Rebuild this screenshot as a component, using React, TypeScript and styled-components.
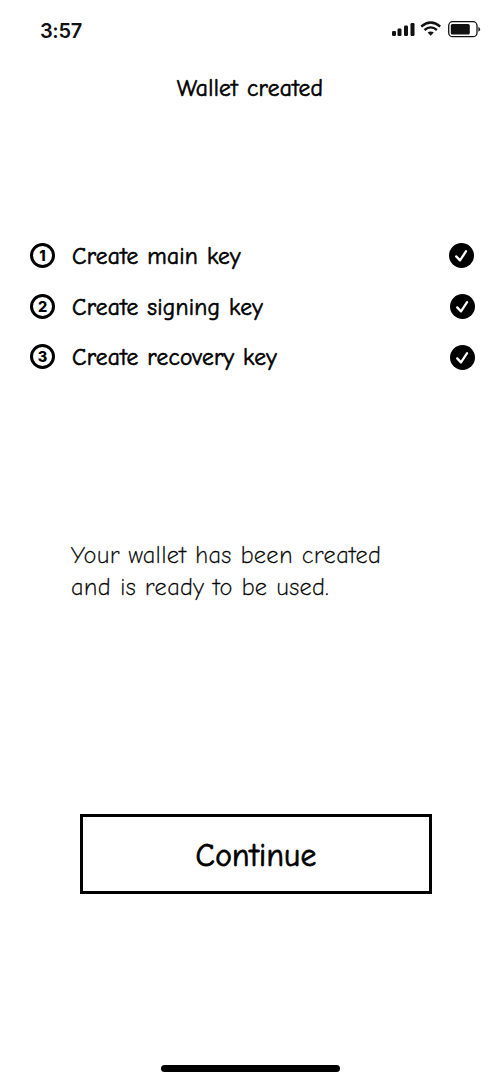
import React from "react";
import styled, { createGlobalStyle } from "styled-components";

const GlobalStyle = createGlobalStyle`
  * { box-sizing: border-box; }
  body { margin: 0; background: #fff; }
`;

const Screen = styled.main`
  width: 500px;
  height: 1083px;
  display: flex;
  flex-direction: column;
  overflow: hidden;
  background: #fff;
  color: #000;
  font-family: "Comic Neue", Lato, sans-serif;
`;

const StatusBar = styled.header`
  height: 60px;
  display: flex;
  justify-content: space-between;
  align-items: center;
  padding: 0 19px 0 40px;
`;

const Clock = styled.time`
  font: 600 20px/24px Inter, sans-serif;
  letter-spacing: -0.35px;
  color: #111;
  padding-top: 1px;
`;

const Title = styled.h1`
  margin: 15px 0 0;
  font-size: 23.5px;
  font-weight: 400;
  line-height: 28px;
  text-align: center;
  letter-spacing: 0.25px;
  word-spacing: 0.9px;
  -webkit-text-stroke: 0.6px #000;
`;

const Steps = styled.ol`
  list-style: none;
  margin: 139px 0 0;
  padding: 0;
`;

const Step = styled.li<{ $end: number; $gap: number }>`
  height: 26px;
  margin-bottom: ${(p) => p.$gap}px;
  display: flex;
  align-items: center;
  padding: 0 ${(p) => p.$end}px 0 30px;
`;

const StepNumber = styled.span`
  width: 25px;
  height: 25px;
  border: 3px solid #000;
  border-radius: 50%;
  display: flex;
  align-items: center;
  justify-content: center;
  font: 800 14.5px/19px Inter, sans-serif;
`;

const StepLabel = styled.span`
  flex: 1;
  margin-left: 17px;
  font-size: 23.5px;
  font-weight: 400;
  line-height: 26px;
  padding-top: 3px;
  letter-spacing: 0.23px;
  word-spacing: 0.8px;
  -webkit-text-stroke: 0.6px #000;
`;

const Message = styled.p`
  margin: 145px 0 0 71px;
  font-size: 24px;
  font-weight: 300;
  line-height: 32px;
  letter-spacing: 0.22px;
  word-spacing: 0.8px;
  -webkit-text-stroke: 0.3px #000;
`;

const ContinueButton = styled.button`
  width: 352px;
  height: 80px;
  flex: none;
  margin: 211px 0 0 80px;
  padding: 3px 0 0;
  border: 3px solid #000;
  background: #fff;
  color: #000;
  font-family: inherit;
  font-size: 31.5px;
  font-weight: 400;
  letter-spacing: 0.25px;
  -webkit-text-stroke: 0.8px #000;
`;

const HomeIndicator = styled.div`
  width: 179px;
  height: 7px;
  margin: auto 0 11px 161px;
  border-radius: 4px;
  background: #000;
`;

const StatusIcons = () => (
  <svg width="90" height="24" viewBox="0 0 90 24" fill="#111">
    <rect x="1" y="13" width="4" height="5" rx="1.2" />
    <rect x="6.5" y="10.5" width="4" height="7.5" rx="1.2" />
    <rect x="13" y="7.5" width="4" height="10.5" rx="1.2" />
    <rect x="19.5" y="5" width="4" height="13" rx="1.2" />
    <g fill="none" stroke="#111" strokeWidth="2.3">
      <path d="M30.2 8.5Q39.7 .5 49.2 8.5" />
      <path d="M33.5 12Q39.7 6.8 45.9 12" />
    </g>
    <path d="M36.6 14.6Q39.7 12.4 42.8 14.6L39.7 17.8Z" />
    <rect x="57.7" y="3.7" width="28.3" height="15" rx="4" fill="none" stroke="#111" strokeWidth="1.3" />
    <rect x="59.8" y="6" width="19" height="10.5" rx="1.6" />
    <path d="M87.4 8.7q1.7 1 1.7 2.5t-1.7 2.5z" />
  </svg>
);

const CheckIcon = styled.svg<{ $drop: number }>`
  margin-top: ${(p) => p.$drop}px;
`;

const Check = ({ drop }: { drop: number }) => (
  <CheckIcon $drop={drop} width="25" height="25" viewBox="0 0 25 25">
    <circle cx="12.5" cy="12.5" r="12.5" />
    <path d="M7.2 13.4 11 17.4 17.1 8.2" fill="none" stroke="#fff" strokeWidth="2.3" strokeLinecap="round" strokeLinejoin="round" />
  </CheckIcon>
);

const steps = [
  { label: "Create main key", end: 26, gap: 25, drop: 0 },
  { label: "Create signing key", end: 25, gap: 24, drop: 0 },
  { label: "Create recovery key", end: 25, gap: 25, drop: 3 },
];

export default function App() {
  return (
    <>
      <GlobalStyle />
      <Screen>
        <StatusBar>
          <Clock>3:57</Clock>
          <StatusIcons />
        </StatusBar>
        <Title>Wallet created</Title>
        <Steps>
          {steps.map((step, i) => (
            <Step key={step.label} $end={step.end} $gap={step.gap}>
              <StepNumber>{i + 1}</StepNumber>
              <StepLabel>{step.label}</StepLabel>
              <Check drop={step.drop} />
            </Step>
          ))}
        </Steps>
        <Message>
          Your wallet has been created
          <br />
          and is ready to be used.
        </Message>
        <ContinueButton>Continue</ContinueButton>
        <HomeIndicator />
      </Screen>
    </>
  );
}
